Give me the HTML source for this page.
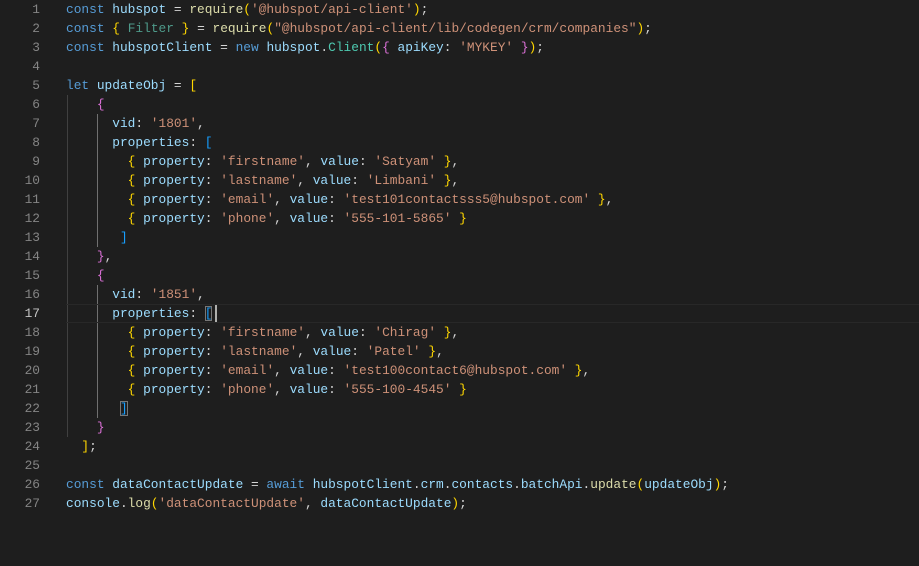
<!DOCTYPE html>
<html><head><style>
body{margin:0;background:#1e1e1e;width:919px;height:566px;overflow:hidden;position:relative;font-family:"Liberation Mono",monospace;font-size:12.85px;}
.l{position:absolute;left:0;height:19px;line-height:19px;width:919px;white-space:pre;color:#d4d4d4}
.n{position:absolute;left:0;width:40px;text-align:right;color:#858585}
.c{position:absolute;left:66px}
.k{color:#569cd6}.v{color:#9cdcfe}.s{color:#ce9178}.f{color:#dcdcaa}.t{color:#4ec9b0}.d{color:#4e9a8a}
.y{color:#ffd700}.p{color:#da70d6}.b{color:#179fff}
.g{position:absolute;width:1px;background:#404040}
.act{box-sizing:border-box;border-top:1px solid #282828;border-bottom:1px solid #282828}
</style></head><body>
<div class="g" style="left:67px;top:95px;height:342px"></div>
<div class="g" style="left:97px;top:114px;height:133px;background:#707070"></div>
<div class="g" style="left:97px;top:285px;height:133px;background:#707070"></div>
<div class="l" style="top:0"><span class="n">1</span><span class="c"><span class="k">const</span> <span class="v">hubspot</span> = <span class="f">require</span><span class="y">(</span><span class="s">'@hubspot/api-client'</span><span class="y">)</span>;</span></div>
<div class="l" style="top:19px"><span class="n">2</span><span class="c"><span class="k">const</span> <span class="y">{</span> <span class="d">Filter</span> <span class="y">}</span> = <span class="f">require</span><span class="y">(</span><span class="s">"@hubspot/api-client/lib/codegen/crm/companies"</span><span class="y">)</span>;</span></div>
<div class="l" style="top:38px"><span class="n">3</span><span class="c"><span class="k">const</span> <span class="v">hubspotClient</span> = <span class="k">new</span> <span class="v">hubspot</span>.<span class="t">Client</span><span class="y">(</span><span class="p">{</span> <span class="v">apiKey</span>: <span class="s">'MYKEY'</span> <span class="p">}</span><span class="y">)</span>;</span></div>
<div class="l" style="top:57px"><span class="n">4</span></div>
<div class="l" style="top:76px"><span class="n">5</span><span class="c"><span class="k">let</span> <span class="v">updateObj</span> = <span class="y">[</span></span></div>
<div class="l" style="top:95px"><span class="n">6</span><span class="c">    <span class="p">{</span></span></div>
<div class="l" style="top:114px"><span class="n">7</span><span class="c">      <span class="v">vid</span>: <span class="s">'1801'</span>,</span></div>
<div class="l" style="top:133px"><span class="n">8</span><span class="c">      <span class="v">properties</span>: <span class="b">[</span></span></div>
<div class="l" style="top:152px"><span class="n">9</span><span class="c">        <span class="y">{</span> <span class="v">property</span>: <span class="s">'firstname'</span>, <span class="v">value</span>: <span class="s">'Satyam'</span> <span class="y">}</span>,</span></div>
<div class="l" style="top:171px"><span class="n">10</span><span class="c">        <span class="y">{</span> <span class="v">property</span>: <span class="s">'lastname'</span>, <span class="v">value</span>: <span class="s">'Limbani'</span> <span class="y">}</span>,</span></div>
<div class="l" style="top:190px"><span class="n">11</span><span class="c">        <span class="y">{</span> <span class="v">property</span>: <span class="s">'email'</span>, <span class="v">value</span>: <span class="s">'test101contactsss5@hubspot.com'</span> <span class="y">}</span>,</span></div>
<div class="l" style="top:209px"><span class="n">12</span><span class="c">        <span class="y">{</span> <span class="v">property</span>: <span class="s">'phone'</span>, <span class="v">value</span>: <span class="s">'555-101-5865'</span> <span class="y">}</span></span></div>
<div class="l" style="top:228px"><span class="n">13</span><span class="c">       <span class="b">]</span></span></div>
<div class="l" style="top:247px"><span class="n">14</span><span class="c">    <span class="p">}</span>,</span></div>
<div class="l" style="top:266px"><span class="n">15</span><span class="c">    <span class="p">{</span></span></div>
<div class="l" style="top:285px"><span class="n">16</span><span class="c">      <span class="v">vid</span>: <span class="s">'1851'</span>,</span></div>
<div class="l act" style="top:304px;left:66px;width:853px"></div>
<div class="l" style="top:304px"><span class="n" style="color:#c6c6c6">17</span><span class="c">      <span class="v">properties</span>: <span class="b" style="outline:1px solid #777;outline-offset:-1px">[</span> <span style="display:inline-block;width:2px;height:17px;background:#aeafad;vertical-align:middle;margin-left:-5px"></span></span></div>
<div class="l" style="top:323px"><span class="n">18</span><span class="c">        <span class="y">{</span> <span class="v">property</span>: <span class="s">'firstname'</span>, <span class="v">value</span>: <span class="s">'Chirag'</span> <span class="y">}</span>,</span></div>
<div class="l" style="top:342px"><span class="n">19</span><span class="c">        <span class="y">{</span> <span class="v">property</span>: <span class="s">'lastname'</span>, <span class="v">value</span>: <span class="s">'Patel'</span> <span class="y">}</span>,</span></div>
<div class="l" style="top:361px"><span class="n">20</span><span class="c">        <span class="y">{</span> <span class="v">property</span>: <span class="s">'email'</span>, <span class="v">value</span>: <span class="s">'test100contact6@hubspot.com'</span> <span class="y">}</span>,</span></div>
<div class="l" style="top:380px"><span class="n">21</span><span class="c">        <span class="y">{</span> <span class="v">property</span>: <span class="s">'phone'</span>, <span class="v">value</span>: <span class="s">'555-100-4545'</span> <span class="y">}</span></span></div>
<div class="l" style="top:399px"><span class="n">22</span><span class="c">       <span class="b" style="outline:1px solid #777;outline-offset:-1px">]</span></span></div>
<div class="l" style="top:418px"><span class="n">23</span><span class="c">    <span class="p">}</span></span></div>
<div class="l" style="top:437px"><span class="n">24</span><span class="c">  <span class="y">]</span>;</span></div>
<div class="l" style="top:456px"><span class="n">25</span></div>
<div class="l" style="top:475px"><span class="n">26</span><span class="c"><span class="k">const</span> <span class="v">dataContactUpdate</span> = <span class="k">await</span> <span class="v">hubspotClient</span>.<span class="v">crm</span>.<span class="v">contacts</span>.<span class="v">batchApi</span>.<span class="f">update</span><span class="y">(</span><span class="v">updateObj</span><span class="y">)</span>;</span></div>
<div class="l" style="top:494px"><span class="n">27</span><span class="c"><span class="v">console</span>.<span class="f">log</span><span class="y">(</span><span class="s">'dataContactUpdate'</span>, <span class="v">dataContactUpdate</span><span class="y">)</span>;</span></div>
</body></html>
